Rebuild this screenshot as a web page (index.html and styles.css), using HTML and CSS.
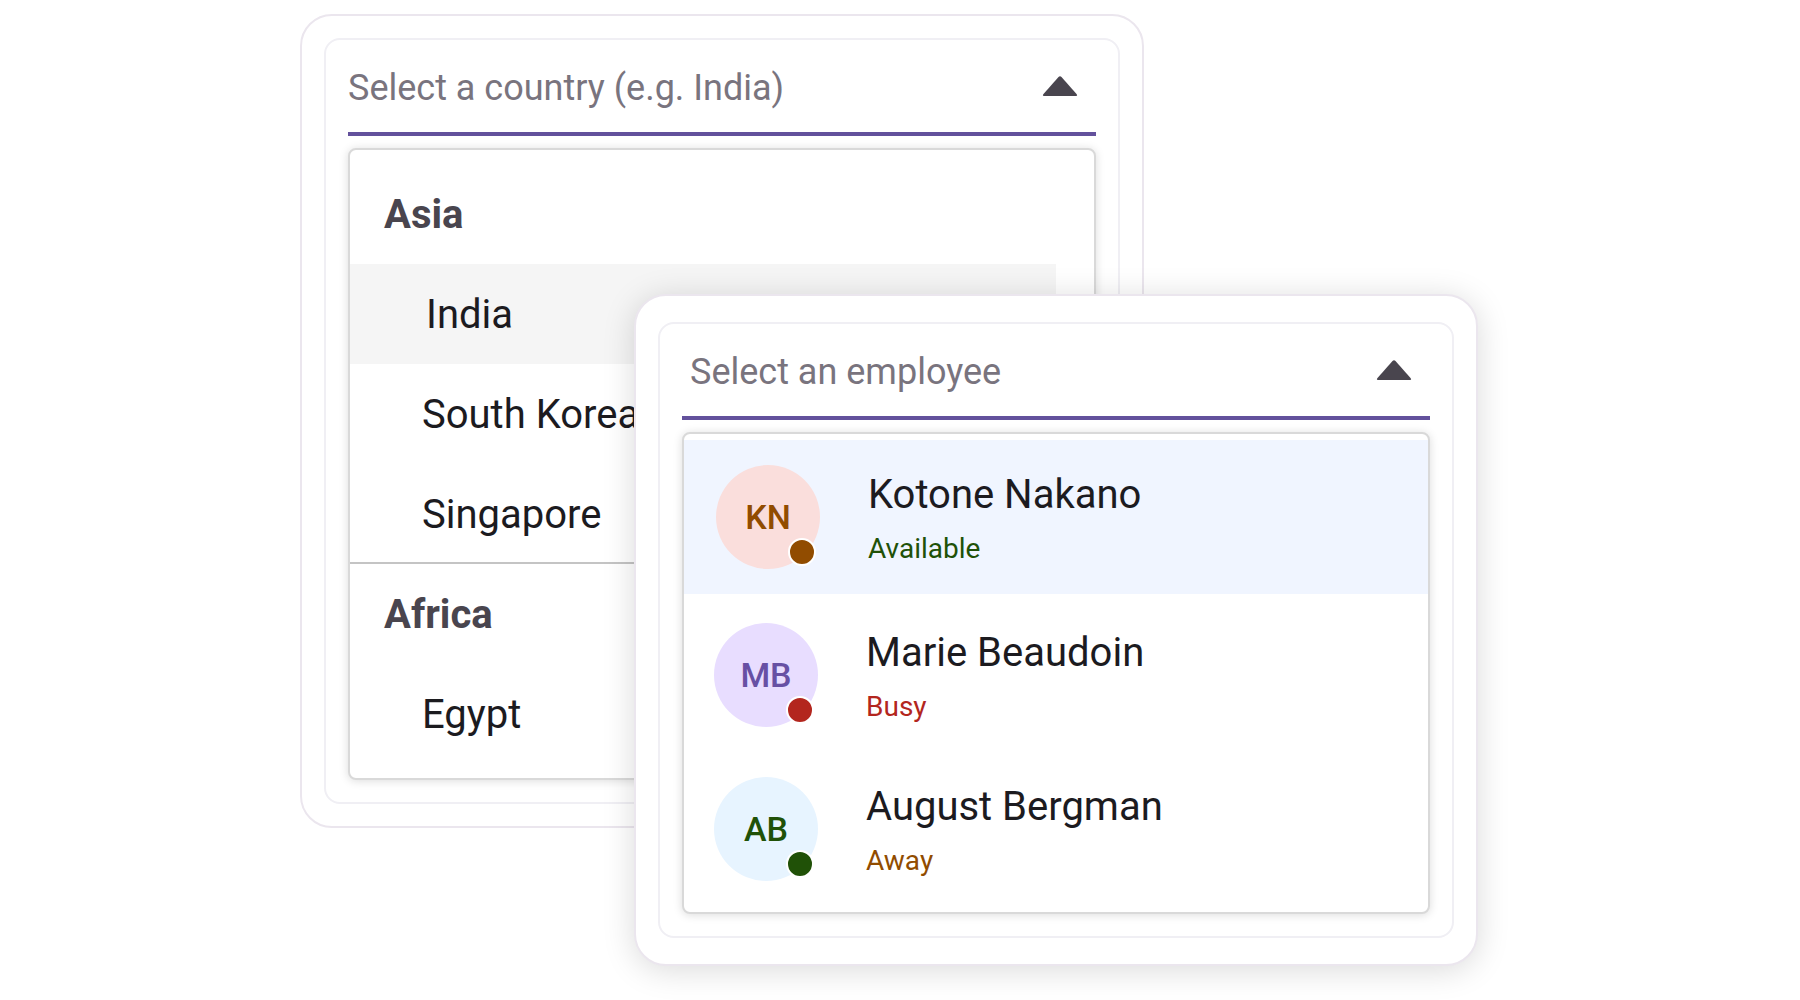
FILE: index.html
```html
<!DOCTYPE html>
<html lang="en">
<head>
    <meta charset="utf-8">
    <title>ComboBox</title>
    <link rel="stylesheet" href="styles.css">
</head>
<body>
    <main class="stage">
        <!-- Grouped list -->
        <section class="card card-country">
            <div class="panel">
                <div class="field">
                    <input class="field-input" type="text" placeholder="Select a country (e.g. India)" aria-label="Country">
                    <button class="field-toggle" type="button" aria-label="Close country list">
                        <svg class="caret" viewBox="0 0 36 20"><path d="M2 20Q0 20 1.500 18L16.500 1Q18 -.7 19.500 1L34.500 18Q36 20 34 20Z"/></svg>
                    </button>
                </div>
                <div class="popup popup-country">
                    <h2 class="group-title">Asia</h2>
                    <ul class="list">
                        <li class="option option-active">India</li>
                        <li class="option">South Korea</li>
                        <li class="option option-last">Singapore</li>
                    </ul>
                    <h2 class="group-title">Africa</h2>
                    <ul class="list">
                        <li class="option">Egypt</li>
                    </ul>
                </div>
            </div>
        </section>

        <!-- List with item template -->
        <section class="card card-employee">
            <div class="panel">
                <div class="field field-employee">
                    <input class="field-input" type="text" placeholder="Select an employee" aria-label="Employee">
                    <button class="field-toggle" type="button" aria-label="Close employee list">
                        <svg class="caret" viewBox="0 0 36 20"><path d="M2 20Q0 20 1.500 18L16.500 1Q18 -.7 19.500 1L34.500 18Q36 20 34 20Z"/></svg>
                    </button>
                </div>
                <ul class="list popup popup-employee">
                    <li class="person person-active">
                        <div class="avatar avatar-pink">KN<span class="dot dot-brown"></span></div>
                        <div class="person-text">
                            <div class="name">Kotone Nakano</div>
                            <div class="status status-available">Available</div>
                        </div>
                    </li>
                    <li class="person">
                        <div class="avatar avatar-purple">MB<span class="dot dot-red"></span></div>
                        <div class="person-text">
                            <div class="name">Marie Beaudoin</div>
                            <div class="status status-busy">Busy</div>
                        </div>
                    </li>
                    <li class="person">
                        <div class="avatar avatar-blue">AB<span class="dot dot-green"></span></div>
                        <div class="person-text">
                            <div class="name">August Bergman</div>
                            <div class="status status-away">Away</div>
                        </div>
                    </li>
                </ul>
            </div>
        </section>
    </main>
</body>
</html>
```
FILE: styles.css
```css
* {
    box-sizing: border-box;
}

body {
    min-height: 100vh;
    margin: 0;
    background: #fff;
    color: #1c1b1f;
    font-family: Roboto, "Liberation Sans", sans-serif;
}

/* The two cards share grid cells so that the second overlaps the first */
.stage {
    display: grid;
    grid-template-columns: 334fr 510fr 334fr;
    grid-template-rows: 280px 534px auto;
    max-width: 1200px;
    margin: 0 auto;
    padding: 14px 22px 14px 0;
}

.card {
    align-self: start;
    padding: 22px;
    border: 2px solid #ebe6ee;
    border-radius: 32px;
    background: #fff;
}

.card-country {
    grid-column: 1 / 3;
    grid-row: 1 / 3;
}

.card-employee {
    grid-column: 2 / 4;
    grid-row: 2 / 4;
    padding: 26px 22px;
    box-shadow: 0 4px 32px rgba(0, 0, 0, 0.15);
}

.panel {
    padding: 0 22px 22px;
    border: 2px solid #f0eff4;
    border-radius: 16px;
}

/* Input */
.field {
    display: flex;
    align-items: center;
    height: 96px;
    padding-right: 18px;
    border-bottom: 4px solid #63519c;
}

.field-employee {
    padding-left: 8px;
}

.field-input {
    flex: 1;
    min-width: 0;
    padding: 4px 0 0;
    border: 0;
    outline: 0;
    background: none;
    color: #1c1b1f;
    font: 400 36px/48px Roboto, "Liberation Sans", sans-serif;
}

.field-input::placeholder {
    color: #79747e;
    opacity: 1;
}

.field-toggle {
    padding: 0;
    border: 0;
    background: none;
    line-height: 0;
}

.caret {
    width: 36px;
    height: 20px;
    fill: #49454e;
}

/* Popup */
.popup {
    margin-top: 12px;
    border: 2px solid #d9d9d9;
    border-radius: 8px;
    background: #fff;
    box-shadow: 0 1px 10px rgba(0, 0, 0, 0.14);
}

.popup-country {
    padding: 14px 0;
}

.list {
    margin: 0;
    padding: 0;
    list-style: none;
}

.group-title,
.option {
    height: 100px;
    font-size: 40px;
    line-height: 102px;
}

.group-title {
    margin: 0;
    padding-left: 34px;
    color: #49454e;
    font-weight: 700;
}

.option {
    padding-left: 72px;
}

.option-active {
    margin-right: 38px;
    padding-left: 76px;
    background: #f5f5f5;
}

.option-last {
    border-bottom: 2px solid #c4c4c4;
}

.popup-employee {
    margin-top: 12px;
    padding: 6px 0;
}

.person {
    display: flex;
    align-items: center;
    gap: 48px;
    height: 154px;
    padding-left: 30px;
}

.person-active {
    margin-bottom: 4px;
    padding-left: 32px;
    background: #f0f5ff;
}

.person-text {
    padding-top: 4px;
}

.avatar {
    position: relative;
    width: 104px;
    height: 104px;
    border-radius: 50%;
    font-size: 34px;
    font-weight: 500;
    line-height: 104px;
    text-align: center;
}

.avatar-pink {
    background: #fadedc;
    color: #914c00;
}

.avatar-purple {
    background: #e8ddff;
    color: #6750a4;
}

.avatar-blue {
    background: #e7f4ff;
    color: #205107;
}

.dot {
    position: absolute;
    right: 4px;
    bottom: 3px;
    width: 28px;
    height: 28px;
    border: 2px solid #fff;
    border-radius: 50%;
}

.dot-brown {
    background: #914c00;
}

.dot-red {
    background: #b3261e;
}

.dot-green {
    background: #205107;
}

.name {
    font-size: 40px;
    line-height: 56px;
}

.status {
    margin-top: 4px;
    font-size: 28px;
    line-height: 44px;
}

.status-available {
    color: #205107;
}

.status-busy {
    color: #b3261e;
}

.status-away {
    color: #914c00;
}
```
